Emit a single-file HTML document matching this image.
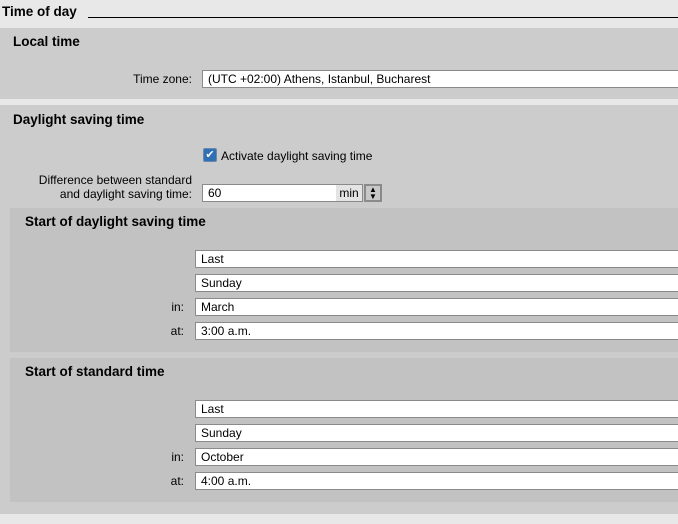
<!DOCTYPE html><html><head><style>
*{margin:0;padding:0;box-sizing:border-box}
body{width:678px;height:524px;background:#e8e8e8;font-family:"Liberation Sans",sans-serif;font-size:12px;color:#000;position:relative;overflow:hidden}
.a{position:absolute}
.h{font-weight:bold;font-size:13.5px}
.p{background:#cccccc}
.q{background:#c2c2c2}
.in{position:absolute;background:#fff;border:1px solid #8a8a8a;height:18px;line-height:17px;padding-left:5px;font-size:12px}
.lb{position:absolute;text-align:right;font-size:12px}
</style></head><body>
<div class="a h" style="left:2px;top:4px">Time of day</div>
<div class="a" style="left:88px;top:17px;width:590px;height:1px;background:#000"></div>
<div class="a p" style="left:0;top:28px;width:678px;height:71px"></div>
<div class="a h" style="left:13px;top:34px">Local time</div>
<div class="lb" style="right:486px;top:72px">Time zone:</div>
<div class="in" style="left:202px;top:70px;width:480px">(UTC +02:00) Athens, Istanbul, Bucharest</div>
<div class="a p" style="left:0;top:105px;width:678px;height:409px"></div>
<div class="a h" style="left:13px;top:112px">Daylight saving time</div>
<div class="a" style="left:203px;top:148px;width:14px;height:14px;background:#2f6fb3;border:1px solid #6a8aa8;border-radius:2px;color:#fff;font-size:11px;line-height:12px;text-align:center">✔</div>
<div class="a" style="left:221px;top:149px">Activate daylight saving time</div>
<div class="lb" style="right:486px;top:173px;line-height:14px">Difference between standard<br>and daylight saving time:</div>
<div class="in" style="left:202px;top:184px;width:161px">60<span style="position:absolute;left:133px;top:0;width:26px;height:16px;background:#e4e4e4;text-align:center">min</span></div>
<div class="a" style="left:364px;top:184px;width:18px;height:18px;background:#c8c8c8;border:2px solid #8a8a8a;font-size:8px;line-height:7px;text-align:center">▲<br>▼</div>
<div class="a q" style="left:10px;top:208px;width:668px;height:144px"></div>
<div class="a h" style="left:25px;top:214px">Start of daylight saving time</div>
<div class="in" style="left:195px;top:250px;width:490px">Last</div>
<div class="in" style="left:195px;top:274px;width:490px">Sunday</div>
<div class="lb" style="right:494px;top:300px">in:</div>
<div class="in" style="left:195px;top:298px;width:490px">March</div>
<div class="lb" style="right:494px;top:324px">at:</div>
<div class="in" style="left:195px;top:322px;width:490px">3:00 a.m.</div>
<div class="a q" style="left:10px;top:358px;width:668px;height:144px"></div>
<div class="a h" style="left:25px;top:364px">Start of standard time</div>
<div class="in" style="left:195px;top:400px;width:490px">Last</div>
<div class="in" style="left:195px;top:424px;width:490px">Sunday</div>
<div class="lb" style="right:494px;top:450px">in:</div>
<div class="in" style="left:195px;top:448px;width:490px">October</div>
<div class="lb" style="right:494px;top:474px">at:</div>
<div class="in" style="left:195px;top:472px;width:490px">4:00 a.m.</div>
</body></html>
